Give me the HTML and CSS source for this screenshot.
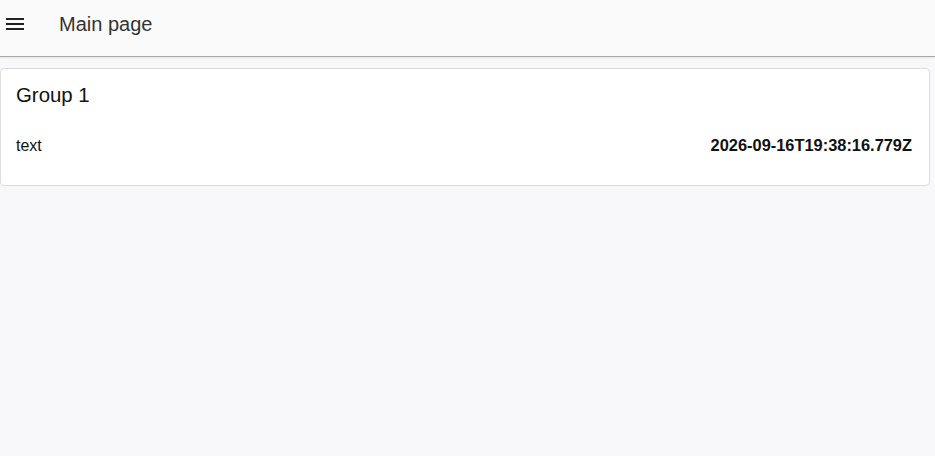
FILE: index.html
```html
<!DOCTYPE html>
<html>
<head>
<meta charset="utf-8">
<link rel="stylesheet" href="styles.css">
</head>
<body>
<header class="toolbar">
  <button class="menu-btn" aria-label="menu">
    <svg width="24" height="24" viewBox="0 0 24 24"><path d="M3 18h18v-2H3v2zm0-5h18v-2H3v2zm0-7v2h18V6H3z" fill="#222"/></svg>
  </button>
  <h1 class="title">Main page</h1>
</header>
<main class="content">
  <section class="card">
    <h2 class="card-title">Group 1</h2>
    <div class="row">
      <span class="label">text</span>
      <span class="value">2026-09-16T19:38:16.779Z</span>
    </div>
  </section>
</main>
</body>
</html>
```
FILE: styles.css
```css
html, body {
  margin: 0;
  padding: 0;
  height: 100%;
}
body {
  background: #f8f8fa;
  font-family: "Liberation Sans", Arial, sans-serif;
  color: #111;
}
.toolbar {
  height: 57px;
  box-sizing: border-box;
  padding-bottom: 8px;
  display: flex;
  align-items: center;
  background: #fafafa;
  border-bottom: 1px solid #a8a8a8;
  box-shadow: 0 1px 2px rgba(0,0,0,0.08);
}
.menu-btn {
  border: 0;
  background: none;
  padding: 0;
  margin: 0 0 0 3px;
  width: 24px;
  height: 24px;
  display: flex;
}
.title {
  margin: 0 0 0 32px;
  font-size: 20px;
  font-weight: 400;
  color: #333;
}
.content {
  padding: 11px 5px 0 0;
}
.card {
  background: #fff;
  border: 1px solid #dcdce0;
  border-radius: 4px;
  padding: 15px 17px 30px 15px;
}
.card-title {
  margin: 0;
  font-size: 20.4px;
  font-weight: 400;
  line-height: 23px;
  color: #111;
}
.row {
  display: flex;
  justify-content: space-between;
  align-items: baseline;
  margin-top: 29px;
  font-size: 16px;
  line-height: 19px;
}
.value {
  font-weight: 700;
  font-size: 16.4px;
}
```
